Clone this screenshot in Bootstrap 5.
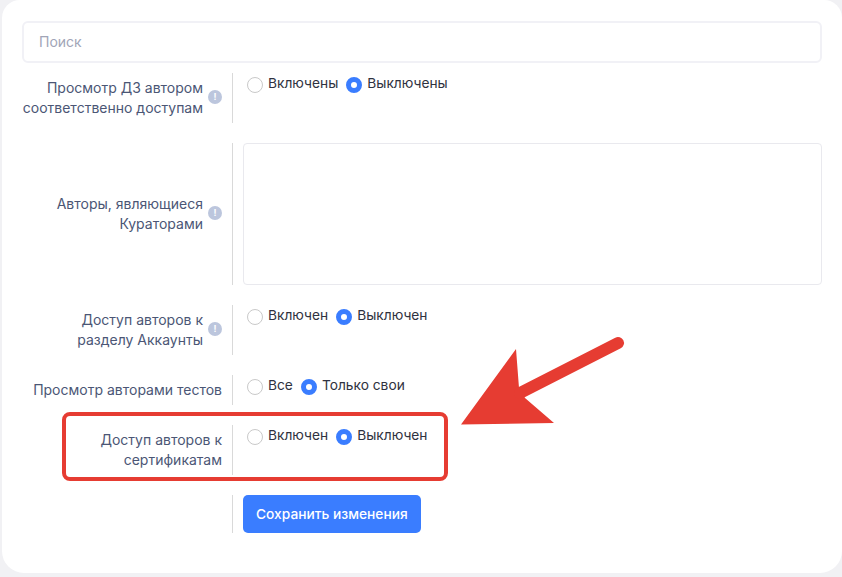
<!DOCTYPE html>
<html lang="ru">
<head>
<meta charset="utf-8">
<title>Настройки</title>
<link rel="stylesheet" href="https://cdn.jsdelivr.net/npm/bootstrap@5.3.0/dist/css/bootstrap.min.css">
<style>
html,body{height:577px;overflow:hidden}
body{background:#f1f1f4;font-family:Inter,"Liberation Sans",sans-serif;font-size:14px;color:#3f4254;position:relative}
.sheet{background:#fff;margin:0 0 4px 2px;height:573px;border-radius:18px 18px 22px 22px;padding:21px 20px 0 20px}
.finder{height:42px;border:2px solid #f1f1f6;border-radius:6px;padding:0 15px 1px;font-size:14px;color:#3f4254;box-shadow:none;margin-bottom:10px}
.finder::placeholder{color:#a1a5b7;opacity:1}
.setrow{margin-bottom:20px}
.setlabel{width:210px;flex:none;color:#4b5675;line-height:20px;padding-right:10px;text-align:right}
.setlabel span{display:block}
.hint{flex:none;width:14px;height:14px;border-radius:50%;background:#bcc6dd;color:#fff;font-size:9px;font-weight:700;line-height:14px;text-align:center;margin:-2px 0 0 5px}
.setbody{border-left:1px solid #d9d9d9;padding-left:10px;flex:1 1 auto;min-width:0}
.choices{padding:0 0 0 4px;color:#2f3240;line-height:20px;gap:8px;font-size:13.75px}
.choices label{display:flex;align-items:flex-start;gap:5px;margin:0;cursor:pointer}
.dot{width:16px;height:16px;border-radius:50%;border:1px solid #c9c9c9;background:#fff;flex:none;margin-top:4px}
.dot.on{border:5px solid #3a7dff}
.memo{height:142px;border:1px solid #e9e9ee;border-radius:4px;resize:none;display:block;width:579px}
.savebtn{background:#3a7dff;border:0;border-radius:5px;color:#fff;font-size:13.75px;font-weight:500;height:38px;padding:0 13px;display:block}
.frame{position:absolute;left:62px;top:412px;width:386px;height:69px;border:4px solid #e63c32;border-radius:8px;pointer-events:none}
.arrowmark{position:absolute;left:440px;top:320px;pointer-events:none}
</style>
</head>
<body>
<div class="sheet">
  <input class="form-control finder" type="text" placeholder="Поиск">

  <div class="d-flex setrow">
    <div class="setlabel d-flex align-items-center justify-content-end"><span>Просмотр ДЗ автором<br>соответственно доступам</span><i class="hint fst-normal">!</i></div>
    <div class="setbody" style="height:50px">
      <div class="choices d-flex">
        <label><i class="dot"></i><span>Включены</span></label>
        <label><i class="dot on"></i><span>Выключены</span></label>
      </div>
    </div>
  </div>

  <div class="d-flex setrow">
    <div class="setlabel d-flex align-items-center justify-content-end"><span>Авторы, являющиеся<br>Кураторами</span><i class="hint fst-normal">!</i></div>
    <div class="setbody"><textarea class="form-control memo" aria-label="Авторы"></textarea></div>
  </div>

  <div class="d-flex setrow">
    <div class="setlabel d-flex align-items-center justify-content-end"><span>Доступ авторов к<br>разделу Аккаунты</span><i class="hint fst-normal">!</i></div>
    <div class="setbody" style="height:50px">
      <div class="choices d-flex">
        <label><i class="dot"></i><span>Включен</span></label>
        <label><i class="dot on"></i><span>Выключен</span></label>
      </div>
    </div>
  </div>

  <div class="d-flex setrow">
    <div class="setlabel d-flex align-items-center justify-content-end"><span>Просмотр авторами тестов</span></div>
    <div class="setbody" style="height:30px">
      <div class="choices d-flex">
        <label><i class="dot"></i><span>Все</span></label>
        <label><i class="dot on"></i><span>Только свои</span></label>
      </div>
    </div>
  </div>

  <div class="d-flex setrow">
    <div class="setlabel d-flex align-items-center justify-content-end"><span>Доступ авторов к<br>сертификатам</span></div>
    <div class="setbody" style="height:50px">
      <div class="choices d-flex">
        <label><i class="dot"></i><span>Включен</span></label>
        <label><i class="dot on"></i><span>Выключен</span></label>
      </div>
    </div>
  </div>

  <div class="d-flex setrow">
    <div class="setlabel"></div>
    <div class="setbody"><button class="btn savebtn" type="button">Сохранить изменения</button></div>
  </div>
</div>

<div class="frame"></div>
<svg class="arrowmark" width="200" height="120" viewBox="0 0 200 120" aria-hidden="true">
  <polygon fill="#e63c32" points="21,104.5 76,29 79,68 85,78 114,103"/>
  <line x1="80" y1="73" x2="178" y2="23" stroke="#e63c32" stroke-width="12" stroke-linecap="round"/>
</svg>
</body>
</html>
